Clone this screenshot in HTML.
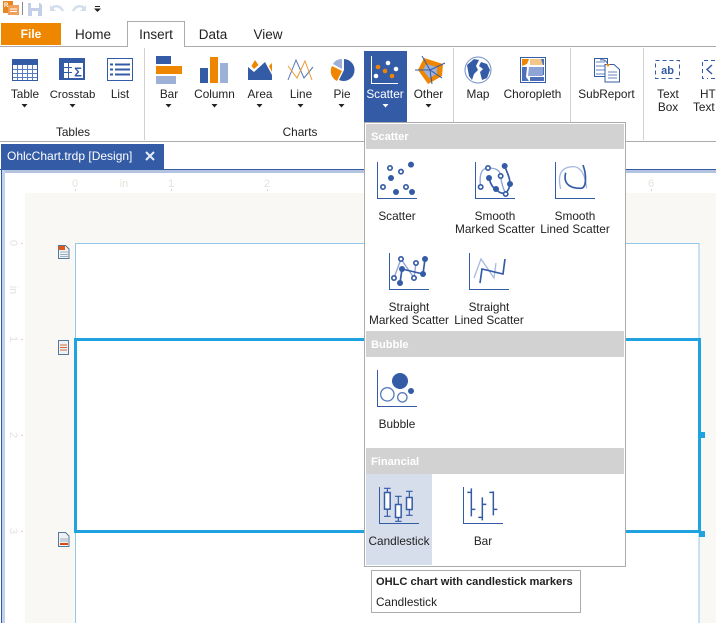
<!DOCTYPE html>
<html><head><meta charset="utf-8">
<style>
html,body{margin:0;padding:0;background:#fff;width:716px;height:623px;overflow:hidden}
svg{display:block;position:absolute;left:0;top:0}
text{font-family:"Liberation Sans",sans-serif;font-size:11.8px;fill:#222}
.m{text-anchor:middle}
.h{font-weight:bold;fill:#fff;font-size:11.1px}
.r{fill:#e6e2d8;font-size:11px;text-anchor:middle}
.t{font-size:13.5px;text-anchor:middle;fill:#222}
</style></head><body>
<svg width="716" height="623" viewBox="0 0 716 623" xmlns="http://www.w3.org/2000/svg">
<!-- QAT -->
<rect x="3" y="1" width="10" height="12" fill="#e8851c"/>
<rect x="8" y="5" width="11" height="10" fill="#f0a05a"/>
<text x="4" y="7" style="font-size:6px;font-weight:bold;fill:#fff">R</text>
<path d="M10 9h7M10 11.500h7" stroke="#fff" stroke-width="1"/>
<rect x="22" y="2" width="1" height="13" fill="#8a8a8a"/>
<path d="M28 3h12l2 2v11H28z" fill="#c3cfe6"/><rect x="31" y="3" width="8" height="5" fill="#fff"/><rect x="32" y="11" width="6" height="5" fill="#fff"/>
<path d="M51 9c3-4 9-4 12 2" fill="none" stroke="#d5deee" stroke-width="2.500"/><path d="M50 5v6h6z" fill="#d5deee"/>
<path d="M85 9c-3-4-9-4-12 2" fill="none" stroke="#d5deee" stroke-width="2.500"/><path d="M86 5v6h-6z" fill="#d5deee"/>
<rect x="95" y="6" width="5" height="1" fill="#222"/><path d="M94 8.500h7l-3.500 3.500z" fill="#222"/>
<!-- Tabs -->
<rect x="1" y="23" width="60" height="22" fill="#ee8600"/>
<text x="31" y="38" class="m" style="font-size:12px;font-weight:bold;fill:#fff">File</text>
<path d="M0 46.500h127.500V21.500h57V46.500H716" fill="none" stroke="#ababab"/>
<text x="93" y="39" class="t">Home</text>
<text x="156" y="39" class="t">Insert</text>
<text x="213" y="39" class="t">Data</text>
<text x="268" y="39" class="t">View</text>
<!-- Ribbon edges -->
<rect x="0" y="141" width="716" height="1" fill="#ababab"/>
<rect x="144" y="48" width="1" height="92" fill="#d0d0d0"/>
<rect x="453" y="48" width="1" height="92" fill="#d0d0d0"/>
<rect x="570" y="48" width="1" height="92" fill="#d0d0d0"/>
<rect x="643" y="48" width="1" height="92" fill="#d0d0d0"/>
<!-- Table -->
<rect x="12" y="59" width="26" height="22" fill="#345ba6"/><rect x="13" y="65" width="24" height="15" fill="#fff"/>
<path d="M13 69.500h24M13 73.500h24M13 77.500h24M17.500 65v15M22.500 65v15M27.500 65v15M32.500 65v15" stroke="#5a7cc0"/>
<!-- Crosstab -->
<rect x="59" y="58" width="26" height="22" fill="#345ba6"/>
<rect x="64" y="63" width="19" height="15" fill="#fff"/>
<path d="M64 67.500h8M64 72.500h8M68.500 63v15" stroke="#345ba6"/>
<text x="78" y="76.500" class="m" style="font-size:13px;font-weight:bold;fill:#345ba6">Σ</text>
<!-- List -->
<rect x="107.500" y="58.500" width="25" height="22" fill="#fff" stroke="#345ba6"/>
<path d="M110 64.500h3M115 64.500h15M110 69.500h3M115 69.500h15M110 74.500h3M115 74.500h15" stroke="#345ba6" stroke-width="2"/>
<!-- Bar -->
<rect x="156" y="56" width="15" height="8" fill="#345ba6"/><rect x="156" y="66" width="26" height="8" fill="#ee8600"/><rect x="156" y="76" width="20" height="8" fill="#9db0d8"/>
<!-- Column -->
<rect x="200" y="68" width="8" height="15" fill="#345ba6"/><rect x="210" y="57" width="8" height="26" fill="#ee8600"/><rect x="220" y="63" width="8" height="20" fill="#9db0d8"/>
<!-- Area -->
<path d="M248 67l6 5 11-10 7 13v5h-24z" fill="#345ba6"/>
<path d="M255 60l3.500 5-4.500 4-2.500-3zM272 63v9l-3-6z" fill="#ee8600"/>
<!-- Line -->
<path d="M288 80l8-20 8 18 9-11" fill="none" stroke="#5577bd" stroke-width="1"/>
<path d="M288 66l9 12 8-17 7 19" fill="none" stroke="#ee9a30" stroke-width="1"/>
<!-- Pie -->
<path d="M344 70L344 59A11 11 0 1 1 339 80z" fill="#345ba6"/>
<path d="M342 71L337 81A11 11 0 0 1 332 66z" fill="#ee8600"/>
<path d="M342 69L333 64A10 10 0 0 1 342 59z" fill="#9db0d8"/>
<!-- Scatter btn -->
<rect x="364" y="51" width="43" height="72" fill="#345ba6"/>
<path d="M371.500 56v27.500H398" fill="none" stroke="#fff"/>
<circle cx="388" cy="63" r="2.300" fill="#fff"/><circle cx="376" cy="76" r="2.300" fill="#fff"/>
<circle cx="396" cy="69" r="2.300" fill="#fff"/>
<circle cx="378" cy="67" r="2.300" fill="#ee8600"/><circle cx="385" cy="71" r="2.300" fill="#ee8600"/><circle cx="392" cy="76" r="2.300" fill="#ee8600"/>
<!-- Other radar -->
<path d="M424 58l19 6-1 12-14 8-10-14z" fill="#ee8600"/>
<path d="M426 64l11 3 0 7-8 4-6-8z" fill="#9db0d8"/>
<path d="M422 56l8 14 2 14M415 70h15l15-7M430 70l12 8" fill="none" stroke="#345ba6" stroke-width="1"/>
<!-- Map -->
<circle cx="478" cy="70" r="13" fill="#fff" stroke="#6f8cc8"/>
<path d="M467 65L474 59L479 60L476 66L478 70L474 74L472 80L469 76Z" fill="#345ba6"/>
<path d="M481 62L487 64L490 70L487 78L482 80L480 72L483 69L479 66Z" fill="#345ba6"/>
<!-- Choropleth -->
<rect x="520.500" y="57.500" width="25" height="25" fill="#fff" stroke="#345ba6"/>
<path d="M522 59h7l-2 5-5 2z" fill="#ee8600"/>
<path d="M530 59h11l3 6h-14z" fill="#f3c68a"/>
<path d="M529 67h14v9h-15z" fill="#8ea4d6"/>
<path d="M522 67h5l-1 10 3 4h-7z" fill="#4e70b8"/>
<path d="M530 77h14v4h-14zM541 59h3v6h-1zM544 67v8h-1v-8z" fill="#4e70b8"/>
<!-- SubReport -->
<path d="M594.500 58.500h13l0 18h-13z" fill="#fff" stroke="#345ba6"/>
<path d="M596 62h9M596 66h9M596 70h9M596 74h9" stroke="#345ba6" stroke-width=".8"/>
<path d="M605 64.500h9l5.500 5v12.500h-14.500z" fill="#fff" stroke="#345ba6"/>
<path d="M608 72h9M608 75h9M608 78h9" stroke="#345ba6" stroke-width=".8"/>
<path d="M600 60c4-1 7 1 8 5" fill="none" stroke="#345ba6"/><path d="M606 64h4l-2 3z" fill="#ee8600"/>
<!-- TextBox -->
<rect x="655.500" y="60.500" width="24" height="18" fill="none" stroke="#345ba6" stroke-dasharray="4 3"/>
<text x="667.500" y="74" class="m" style="font-size:11px;font-weight:bold;fill:#345ba6">ab</text>
<!-- HTML -->
<path d="M708 60.500h-5.500v18h5.500M711 60.500h5M711 78.500h5" fill="none" stroke="#345ba6" stroke-dasharray="4 3"/>
<path d="M712 65l-5 4.500 5 4.500" fill="none" stroke="#345ba6" stroke-width="1.500"/>
<!-- ribbon labels -->
<text x="25" y="98" class="m">Table</text>
<text x="72.500" y="98" class="m" style="font-size:11.400px">Crosstab</text>
<text x="120" y="98" class="m">List</text>
<text x="169" y="98" class="m">Bar</text>
<text x="214.500" y="98" class="m">Column</text>
<text x="260" y="98" class="m">Area</text>
<text x="301" y="98" class="m">Line</text>
<text x="342" y="98" class="m">Pie</text>
<text x="385" y="98" class="m" style="fill:#fff">Scatter</text>
<text x="428.500" y="98" class="m">Other</text>
<text x="478" y="98" class="m">Map</text>
<text x="532.500" y="98" class="m">Choropleth</text>
<text x="606.500" y="98" class="m">SubReport</text>
<text x="668" y="98" class="m">Text</text><text x="668" y="111" class="m">Box</text>
<text x="700" y="98">HTML</text><text x="693" y="111">Text</text>
<text x="73" y="136" class="m">Tables</text>
<text x="300" y="136" class="m">Charts</text>
<g fill="#222">
<path d="M21.500 104h6l-3 3.500zM69.500 104h6l-3 3.500zM165.500 104h6l-3 3.500zM211.500 104h6l-3 3.500zM256.500 104h6l-3 3.500zM297.500 104h6l-3 3.500zM338.500 104h6l-3 3.500zM425.500 104h6l-3 3.500z"/>
<path d="M382.500 104h6l-3 3.500z" fill="#fff"/>
</g>
<!-- Document tab -->
<rect x="1" y="144" width="163" height="26" fill="#345ba6"/>
<text x="7" y="160" style="font-size:12px;fill:#fff">OhlcChart.trdp [Design]</text>
<path d="M146 152l8 8M154 152l-8 8" stroke="#e6ebf5" stroke-width="2"/>
<rect x="0" y="169" width="716" height="1" fill="#345ba6"/>
<rect x="1" y="170" width="715" height="3" fill="#b4c3e0"/>
<rect x="1" y="170" width="1" height="453" fill="#345ba6"/>
<rect x="2" y="170" width="3" height="453" fill="#c3d0ea"/>
<!-- canvas -->
<rect x="25" y="193" width="691" height="430" fill="#f9f8f4"/>
<rect x="75.500" y="243.500" width="623.500" height="400" fill="#fff" stroke="#93c9e8"/>
<!-- rulers -->
<text x="75" y="187" class="r">0</text><text x="124" y="187" class="r">in</text><text x="171" y="187" class="r">1</text><text x="267" y="187" class="r">2</text><text x="651" y="187" class="r">6</text>
<path d="M75.500 189v2M171.500 189v2M267.500 189v2M651.500 189v2" stroke="#d8d4c8"/>
<text class="r" transform="translate(10,243) rotate(90)">0</text>
<text class="r" transform="translate(10,290) rotate(90)">in</text>
<text class="r" transform="translate(10,339) rotate(90)">1</text>
<text class="r" transform="translate(10,435) rotate(90)">2</text>
<text class="r" transform="translate(10,531) rotate(90)">3</text>
<path d="M21 243.500h2M21 339.500h2M21 435.500h2M21 531.500h2" stroke="#d8d4c8"/>
<!-- band icons -->
<path d="M58.500 245.500h7l3.500 3.500v9.500h-10.500z" fill="#eef2f6" stroke="#56789a"/><rect x="59" y="246" width="6" height="4" fill="#e8560f"/><path d="M60 252h8M60 254.500h8M60 256.500h8" stroke="#9fb0bf"/>
<path d="M58.500 340.500h10v14h-10z" fill="#eef2f6" stroke="#56789a"/><path d="M60 345h7M60 347.500h7M60 350h7" stroke="#d8683a"/>
<path d="M58.500 532.500h7l3.500 3.500v10.500h-10.500z" fill="#eef2f6" stroke="#56789a"/><path d="M60 539h8M60 541h8" stroke="#9fb0bf"/><rect x="60" y="543" width="8" height="2" fill="#d84a10"/>
<!-- selection -->
<rect x="75.500" y="339.500" width="624" height="192" fill="#fff" stroke="#20a2e0" stroke-width="3"/>
<rect x="700" y="432" width="5" height="6" fill="#20a2e0"/>
<rect x="699" y="531" width="6" height="6" fill="#20a2e0"/>
<!-- popup -->
<rect x="364.500" y="122.500" width="261" height="444" fill="#fff" stroke="#ababab"/>
<rect x="366" y="124" width="258" height="25" fill="#d2d2d2"/>
<text x="371" y="140" class="h">Scatter</text>
<rect x="366" y="331" width="258" height="26" fill="#d2d2d2"/>
<text x="371" y="348" class="h">Bubble</text>
<rect x="366" y="448" width="258" height="26" fill="#d2d2d2"/>
<text x="371" y="465" class="h">Financial</text>
<rect x="366" y="474" width="66" height="91" fill="#d6deec"/>
<!-- chart axes, pixel aligned -->
<path d="M377.500 162v36.500H417M475.500 162v36.500H515M555.500 162v36.500H595M389.500 253v36.500H429M469.500 253v36.500H509M377.500 370v36.500H417M379.500 487v36.500H419M463.500 487v36.500H503" fill="none" stroke="#345ba6"/>
<!-- popup icons row 1 -->
<g transform="translate(364,120) scale(.33333)" fill="none" stroke="#345ba6" stroke-width="4">
<g fill="#fff" stroke-width="5"><circle cx="78" cy="144" r="6.500"/><circle cx="111" cy="155" r="6.500"/><circle cx="57" cy="201" r="6.500"/><circle cx="126" cy="201" r="6.500"/></g>
<g fill="#345ba6" stroke="none"><circle cx="141" cy="134" r="9"/><circle cx="81" cy="174" r="9"/><circle cx="96" cy="216" r="9"/><circle cx="144" cy="216" r="9"/></g>
<path d="M350 201C344 160 355 144 372 144C395 144 408 150 410 168C412 190 418 205 425 222" stroke="#8ea4d6"/>
<path d="M375 174C380 195 390 207 396 207C410 225 430 225 436 200C442 180 430 160 422 138" stroke-width="5"/>
<g fill="#fff" stroke-width="5"><circle cx="350" cy="201" r="6.500"/><circle cx="372" cy="144" r="6.500"/><circle cx="410" cy="168" r="6.500"/><circle cx="425" cy="222" r="6.500"/></g>
<g fill="#345ba6" stroke="none"><circle cx="375" cy="174" r="9"/><circle cx="396" cy="207" r="9"/><circle cx="438" cy="192" r="9"/><circle cx="422" cy="138" r="9"/></g>
<path d="M590 207C580 165 590 142 625 140C655 138 665 175 668 205" stroke="#a9bae0"/>
<path d="M605 158C598 185 610 205 650 205C668 205 668 165 657 135" stroke-width="5"/>
</g>
<!-- row 2 + bubble -->
<g transform="translate(364,240) scale(.33333)" fill="none" stroke="#345ba6" stroke-width="4">
<path d="M90 114L111 57L150 114L156 69" stroke="#8ea4d6"/>
<path d="M108 129L114 87L177 102L183 57" stroke-width="5"/>
<g fill="#fff" stroke-width="5"><circle cx="90" cy="114" r="6.500"/><circle cx="111" cy="57" r="6.500"/><circle cx="150" cy="114" r="6.500"/><circle cx="156" cy="69" r="6.500"/></g>
<g fill="#345ba6" stroke="none"><circle cx="108" cy="129" r="9"/><circle cx="114" cy="87" r="9"/><circle cx="177" cy="102" r="9"/><circle cx="183" cy="57" r="9"/></g>
<path d="M330 114L351 57L390 114L396 69" stroke="#a9bae0"/>
<path d="M348 129L354 87L417 102L423 57" stroke-width="5"/>
<circle cx="108" cy="423" r="24" fill="#345ba6" stroke="none"/>
<circle cx="70" cy="463" r="20" stroke-width="4" stroke="#5a7cc0"/>
<circle cx="115" cy="472" r="14" stroke-width="4" stroke="#5a7cc0"/>
<circle cx="141" cy="453" r="9" fill="#345ba6" stroke="none"/>
</g>
<!-- financial -->
<g transform="translate(364,440) scale(.33333)" fill="none" stroke="#345ba6" stroke-width="3.500">
<path d="M70 145V229M60 145H80M60 229H80M103 169V244M93 169H113M93 244H113M136 154V226M126 154H146M126 226H146"/>
<rect x="61.500" y="157.500" width="17" height="50" fill="#fff" stroke-width="4.500"/>
<rect x="94.500" y="193.500" width="17" height="39" fill="#fff" stroke-width="4.500"/>
<rect x="127.500" y="172.500" width="17" height="36" fill="#fff" stroke-width="4.500"/>
<path d="M322 145V229M310 157H322M322 208H334M355 172V241M343 232H355M355 193H367M388 154V226M376 157H388M388 208H400" stroke-width="4.500"/>
</g>
<!-- popup labels -->
<text x="397" y="220" class="m">Scatter</text>
<text x="495" y="220" class="m">Smooth</text><text x="495" y="233" class="m">Marked Scatter</text>
<text x="575" y="220" class="m">Smooth</text><text x="575" y="233" class="m">Lined Scatter</text>
<text x="409" y="311" class="m">Straight</text><text x="409" y="324" class="m">Marked Scatter</text>
<text x="489" y="311" class="m">Straight</text><text x="489" y="324" class="m">Lined Scatter</text>
<text x="397" y="428" class="m">Bubble</text>
<text x="399" y="545" class="m">Candlestick</text>
<text x="483" y="545" class="m">Bar</text>
<!-- tooltip -->
<rect x="371.500" y="570.500" width="209" height="42" fill="#fff" stroke="#ababab"/>
<text x="376" y="585" style="font-weight:bold;font-size:11.100px">OHLC chart with candlestick markers</text>
<text x="376" y="606">Candlestick</text>
</svg>
</body></html>
